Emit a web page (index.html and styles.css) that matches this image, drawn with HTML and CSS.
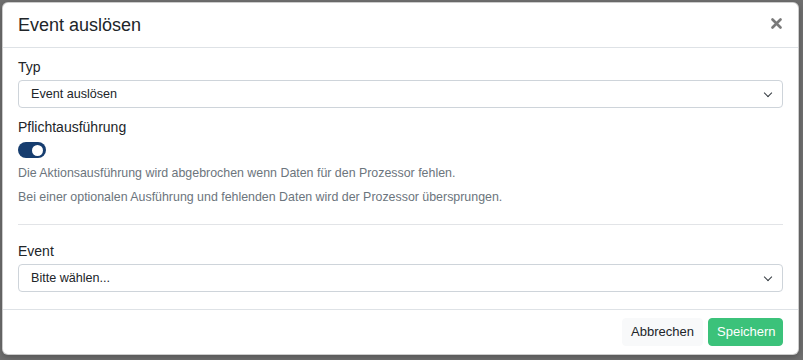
FILE: index.html
```html
<!DOCTYPE html>
<html lang="de">
<head>
    <meta charset="UTF-8">
    <meta name="viewport" content="width=device-width, initial-scale=1.0">
    <title>Event auslösen</title>
    <link rel="stylesheet" href="styles.css">
</head>
<body>
    <div class="modal">
        <div class="modal-header">
            <h5 class="modal-title">Event auslösen</h5>
            <button class="btn-close" type="button" aria-label="Schließen">
                <svg width="11" height="11" viewBox="0 0 11 11">
                    <path d="M1.5 1.5 L9.5 9.5 M9.5 1.5 L1.5 9.5" stroke="#7a7a7a" stroke-width="2.6" stroke-linecap="round"/>
                </svg>
            </button>
        </div>
        <div class="modal-body">
            <div class="form-group">
                <label class="form-label" for="typ">Typ</label>
                <div class="select">Event auslösen</div>
            </div>
            <div class="form-group switch-group">
                <label class="form-label">Pflichtausführung</label>
                <div class="switch"><span class="knob"></span></div>
                <div class="form-text first">Die Aktionsausführung wird abgebrochen wenn Daten für den Prozessor fehlen.</div>
                <div class="form-text">Bei einer optionalen Ausführung und fehlenden Daten wird der Prozessor übersprungen.</div>
            </div>
            <hr class="divider">
            <div class="form-group">
                <label class="form-label" for="event">Event</label>
                <div class="select">Bitte wählen...</div>
            </div>
        </div>
        <div class="modal-footer">
            <button class="btn btn-light" type="button">Abbrechen</button>
            <button class="btn btn-success" type="button">Speichern</button>
        </div>
    </div>
</body>
</html>
```

FILE: styles.css
```css
* {
    box-sizing: border-box;
}
body {
    margin: 0;
    padding: 2px 4px 0 2px;
    background-color: #6f6f6f;
    font-family: "Liberation Sans", Arial, sans-serif;
    color: #212529;
    height: 360px;
    overflow: hidden;
}
.modal {
    width: 797px;
    background-color: #fff;
    border: 1px solid rgba(0, 0, 0, 0.2);
    border-radius: 6px;
    box-shadow: 0 2px 6px rgba(0, 0, 0, 0.25);
}
.modal-header {
    display: flex;
    align-items: center;
    justify-content: space-between;
    height: 45px;
    padding: 0 16px 0 15px;
    border-bottom: 1px solid #dee2e6;
}
.modal-title {
    margin: 0;
    font-size: 18px;
    font-weight: normal;
    line-height: 24px;
    padding-bottom: 1px;
}
.btn-close {
    border: none;
    background: none;
    padding: 0;
    width: 11px;
    height: 11px;
    display: flex;
    margin-bottom: 4px;
}
.modal-body {
    padding: 9px 15px 17px;
}
.form-label {
    display: block;
    font-size: 14px;
    line-height: 20px;
    margin-bottom: 3px;
}
.select {
    position: relative;
    height: 28px;
    border: 1px solid #ced4da;
    border-radius: 4px;
    padding: 0 30px 0 12px;
    font-size: 12.6px;
    line-height: 26px;
    color: #212529;
}
.select::after {
    content: "";
    position: absolute;
    right: 11px;
    top: 9px;
    width: 5px;
    height: 5px;
    border-right: 1.5px solid #343a40;
    border-bottom: 1.5px solid #343a40;
    transform: rotate(45deg);
}
.switch-group {
    margin-top: 9px;
}
.switch-group .form-label {
    margin-bottom: 5px;
}
.switch {
    width: 28px;
    height: 16px;
    border-radius: 8px;
    background-color: #163d6f;
    display: flex;
    align-items: center;
    justify-content: flex-end;
    padding-right: 3px;
}
.knob {
    width: 11px;
    height: 11px;
    border-radius: 50%;
    background-color: #fff;
}
.form-text {
    font-size: 12.4px;
    line-height: 18px;
    color: #6c757d;
    margin-top: 6px;
}
.divider {
    margin: 18px 0 16px;
    border: none;
    border-top: 1px solid #e2e4e7;
}
.modal-footer {
    display: flex;
    justify-content: flex-end;
    gap: 5px;
    padding: 8px 15px 8px;
    border-top: 1px solid #dee2e6;
}
.btn {
    height: 28px;
    padding: 0 8px;
    border: 1px solid transparent;
    border-radius: 4px;
    font-family: inherit;
    font-size: 13px;
    line-height: 26px;
}
.btn-light {
    background-color: #f8f9fa;
    border-color: #f8f9fa;
    color: #212529;
}
.btn-success {
    width: 75px;
    background-color: #3bc27a;
    border-color: #3bc27a;
    color: #fff;
}
```
